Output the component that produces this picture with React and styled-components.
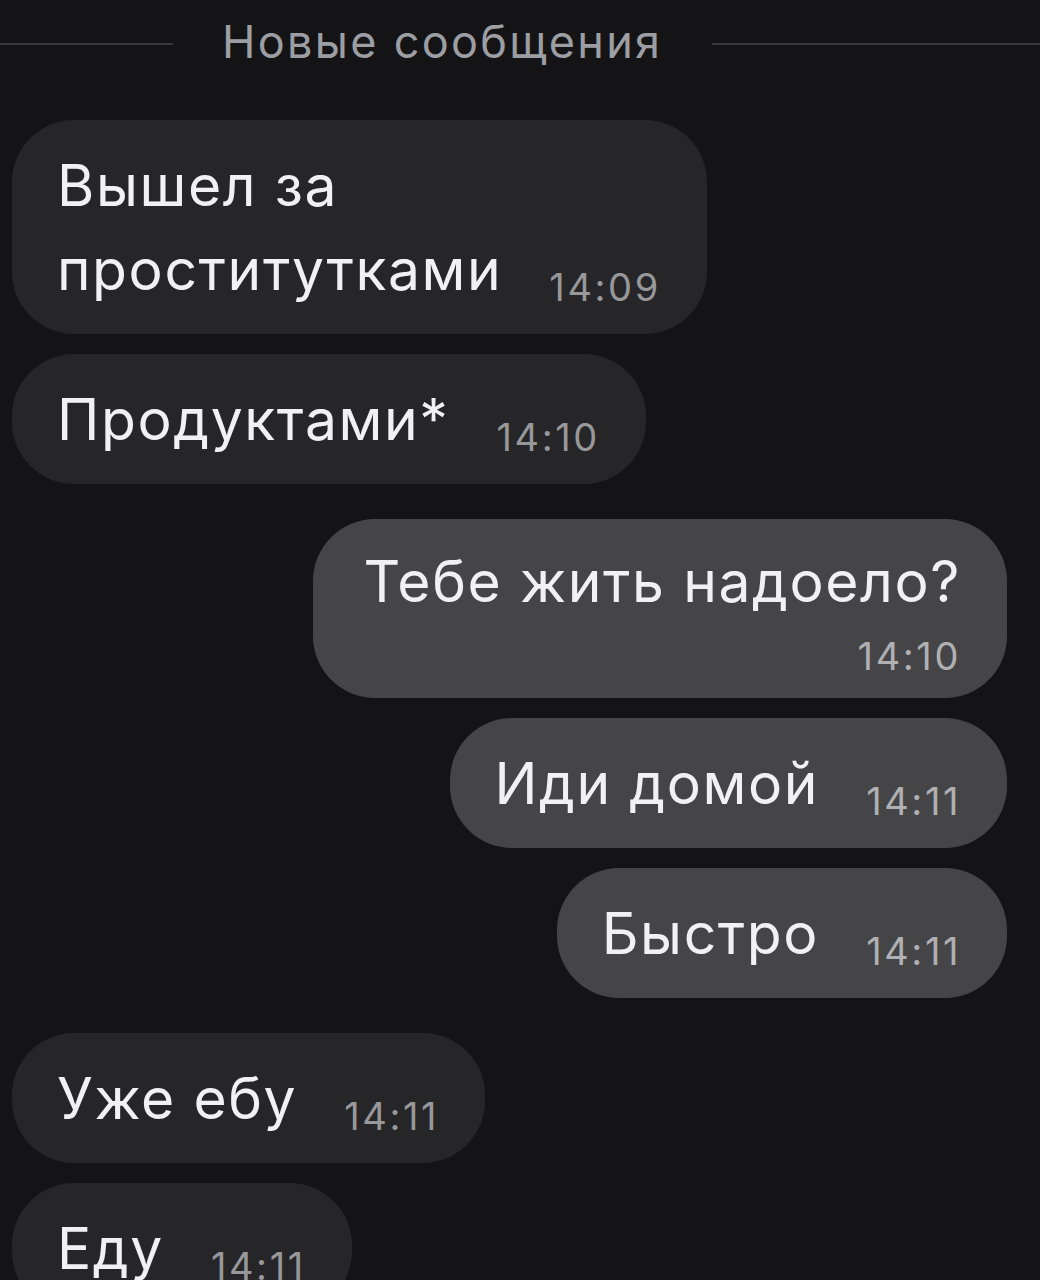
import styled, { createGlobalStyle } from "styled-components";

const GlobalStyle = createGlobalStyle`
  html, body {
    margin: 0;
    padding: 0;
    background: #141416;
  }
  body {
    font-family: Inter, "Liberation Sans", Arial, sans-serif;
    overflow: hidden;
  }
`;

const messages = [
  { id: 1, side: "left", lines: ["Вышел за", "проститутками"], time: "14:09" },
  { id: 2, side: "left", lines: ["Продуктами*"], time: "14:10" },
  { id: 3, side: "right", lines: ["Тебе жить надоело?"], time: "14:10", stacked: true },
  { id: 4, side: "right", lines: ["Иди домой"], time: "14:11" },
  { id: 5, side: "right", lines: ["Быстро"], time: "14:11" },
  { id: 6, side: "left", lines: ["Уже ебу"], time: "14:11" },
  { id: 7, side: "left", lines: ["Еду"], time: "14:11" },
];

const Styled = {
  Page: styled.div`
    height: 1280px;
    overflow: hidden;
    background: #141416;
    padding: 0 33px 0 12px;
    box-sizing: border-box;
  `,
  Divider: styled.div`
    height: 88px;
    display: flex;
    align-items: center;
    margin-left: -12px;
    margin-right: -33px;
  `,
  Line: styled.div`
    height: 2px;
    background: #38383b;
    flex: ${({ $grow }) => ($grow ? "1" : "0 0 173px")};
  `,
  DividerText: styled.span`
    font-size: 45px;
    letter-spacing: 2.3px;
    color: #9c9ea4;
    padding: 0 50px 6px 49px;
    white-space: nowrap;
  `,
  List: styled.div`
    display: flex;
    flex-direction: column;
    padding-top: 32px;
  `,
  Bubble: styled.div`
    align-self: ${({ $side }) => ($side === "right" ? "flex-end" : "flex-start")};
    margin-top: ${({ $gap }) => $gap}px;
    background: ${({ $side }) => ($side === "right" ? "#454547" : "#262628")};
    border-radius: 62px;
    padding: ${({ $stacked }) => ($stacked ? "21px 46px 20px 50px" : "24px 46px 22px 45px")};
    color: #f1f1f3;
    font-size: 57px;
    letter-spacing: 1.6px;
    line-height: 84px;
    white-space: nowrap;
    text-align: ${({ $stacked }) => ($stacked ? "right" : "left")};
  `,
  Time: styled.span`
    display: ${({ $stacked }) => ($stacked ? "block" : "inline-block")};
    margin: ${({ $stacked }) => ($stacked ? "10px 0 0 0" : "0 0 0 47px")};
    vertical-align: -11px;
    font-size: 38px;
    letter-spacing: 2.6px;
    line-height: 44px;
    color: ${({ $side }) => ($side === "right" ? "#b0b0b3" : "#98989b")};
  `,
};

function App() {
  return (
    <>
      <GlobalStyle />
      <Styled.Page>
        <Styled.Divider>
          <Styled.Line />
          <Styled.DividerText>Новые сообщения</Styled.DividerText>
          <Styled.Line $grow />
        </Styled.Divider>

        <Styled.List>
          {messages.map((m, i) => {
            const prev = messages[i - 1];
            const gap = !prev ? 0 : prev.side === m.side ? 20 : 35;
            return (
              <Styled.Bubble key={m.id} $side={m.side} $gap={gap} $stacked={m.stacked}>
                {m.lines.map((line, j) => (
                  <span key={j}>
                    {j > 0 && <br />}
                    {line}
                  </span>
                ))}
                <Styled.Time $side={m.side} $stacked={m.stacked}>
                  {m.time}
                </Styled.Time>
              </Styled.Bubble>
            );
          })}
        </Styled.List>
      </Styled.Page>
    </>
  );
}

export default App;
